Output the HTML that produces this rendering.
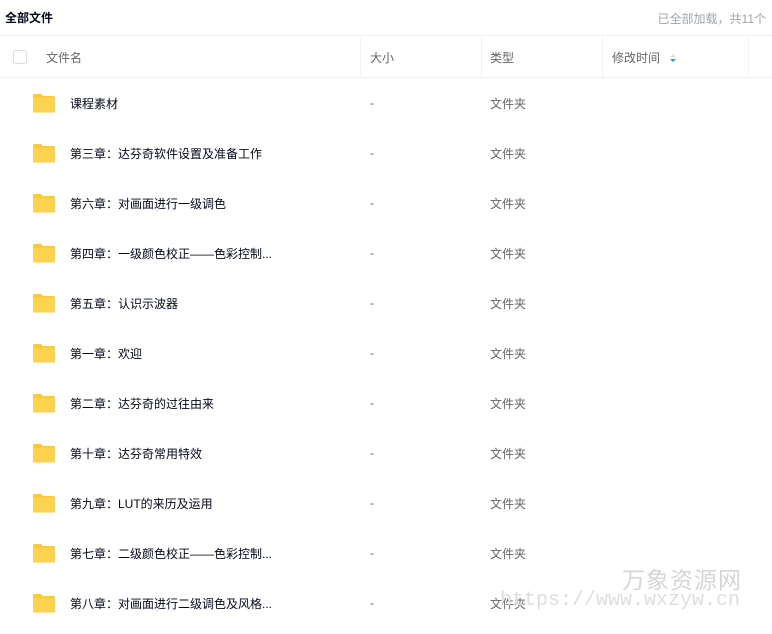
<!DOCTYPE html>
<html><head><meta charset="utf-8"><style>
*{margin:0;padding:0;box-sizing:border-box}
body{width:772px;height:634px;background:#fff;font-family:"Liberation Sans","Noto Sans CJK SC",sans-serif;font-size:12px;color:#424e67;position:relative;overflow:hidden}
.top{height:36px;position:relative;border-bottom:1px solid #f2f2f2}
.top .t{position:absolute;left:5px;top:9px;font-size:12px;font-weight:bold;color:#03081a}
.top .r{position:absolute;right:6px;top:10px;color:#a0a5ad;font-size:12px}
.hd{position:absolute;top:37px;left:0;width:772px;height:41px;border-bottom:1px solid #f0f0f0;color:#666}
.hd span{position:absolute;top:12px}
.sep{position:absolute;top:0;width:1px;height:40px;background:#f2f2f2}
.cb{position:absolute;left:13px;top:13px;width:14px;height:14px;border:1px solid #dcdcdc;border-radius:3px}
.row{position:absolute;left:0;width:772px;height:50px}
.row .n{position:absolute;left:70px;top:17px;color:#03081a}
.row .s{position:absolute;left:370px;top:18px;color:#666}
.row .ty{position:absolute;left:490px;top:17px;color:#666}
.fd{position:absolute;left:32px;top:15px;width:24px;height:20px}
.wm1{position:absolute;left:622px;top:561px;font-size:23px;color:#d6d6d6;letter-spacing:1px}
.wm2{position:absolute;left:500px;top:589px;font-family:"Liberation Mono",monospace;font-size:20px;color:#dedede}
</style></head><body>
<div class="top"><div class="t">全部文件</div><div class="r">已全部加载，共11个</div></div>
<div class="hd">
<div class="cb"></div>
<span style="left:46px">文件名</span>
<div class="sep" style="left:360px"></div><span style="left:370px">大小</span>
<div class="sep" style="left:481px"></div><span style="left:490px">类型</span>
<div class="sep" style="left:602px"></div><span style="left:612px">修改时间</span>
<svg style="position:absolute;left:670px;top:16px" width="6" height="10"><path d="M0 4L3 1L6 4Z" fill="#ddd"/><path d="M0 6L3 9L6 6Z" fill="#06a7ff"/></svg>
<div class="sep" style="left:748px"></div>
</div>
<div id="rows"></div>
<script>
var names=["课程素材","第三章：达芬奇软件设置及准备工作","第六章：对画面进行一级调色","第四章：一级颜色校正——色彩控制...","第五章：认识示波器","第一章：欢迎","第二章：达芬奇的过往由来","第十章：达芬奇常用特效","第九章：LUT的来历及运用","第七章：二级颜色校正——色彩控制...","第八章：对画面进行二级调色及风格..."];
var h="";
names.forEach(function(n,i){h+='<div class="row" style="top:'+(78+i*50)+'px"><svg class="fd" viewBox="0 0 24 20"><path d="M1 2.5Q1 1 2.5 1H9L11 3H21.5Q23 3 23 4.5V18Q23 19.5 21.5 19.5H2.5Q1 19.5 1 18Z" fill="#ffc83d"/><path d="M1 6Q1 5 2.5 5H21.5Q23 5 23 6.5V18Q23 19.5 21.5 19.5H2.5Q1 19.5 1 18Z" fill="#ffd24f"/></svg><span class="n">'+n+'</span><span class="s">-</span><span class="ty">文件夹</span></div>';});
document.getElementById("rows").innerHTML=h;
</script>
<div class="wm1">万象资源网</div>
<div class="wm2">https://www.wxzyw.cn</div>
</body></html>
